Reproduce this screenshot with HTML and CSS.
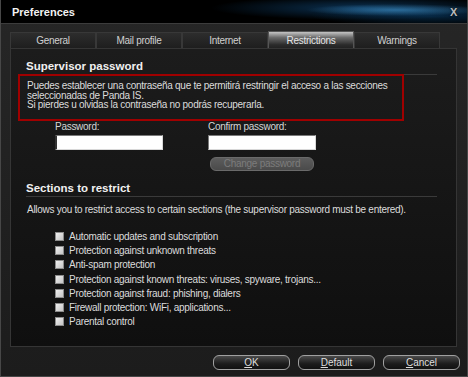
FILE: index.html
```html
<!DOCTYPE html>
<html lang="en">
  <head>
    <meta charset="UTF-8" />
    <title>Preferences</title>
    <link rel="stylesheet" href="styles.css">
  </head>
  <body>
    <div class="window">
      <div class="titlebar">
        <span class="title">Preferences</span>
        <span class="close">X</span>
      </div>

      <div class="content">
        <!-- Tabs -->
        <div class="tabs">
          <div class="tab">General</div>
          <div class="tab">Mail profile</div>
          <div class="tab">Internet</div>
          <div class="tab active">Restrictions</div>
          <div class="tab">Warnings</div>
        </div>

        <div class="panel">
          <!-- Supervisor password -->
          <h2>Supervisor password</h2>
          <div class="notice">
            <p>Puedes establecer una contraseña que te permitirá restringir el acceso a las secciones<br>seleccionadas de Panda IS.</p>
            <p>Si pierdes u olvidas la contraseña no podrás recuperarla.</p>
          </div>
          <div class="fields">
            <div class="field">
              <label for="pwd">Password:</label>
              <input type="password" id="pwd" class="caret" />
            </div>
            <div class="field">
              <label for="pwd2">Confirm password:</label>
              <input type="password" id="pwd2" />
              <button type="button" class="change" disabled>Change password</button>
            </div>
          </div>

          <!-- Sections to restrict -->
          <h2 class="second">Sections to restrict</h2>
          <p class="desc">Allows you to restrict access to certain sections (the supervisor password must be entered).</p>
          <ul class="checks">
            <li><span class="box"></span>Automatic updates and subscription</li>
            <li><span class="box"></span>Protection against unknown threats</li>
            <li><span class="box"></span>Anti-spam protection</li>
            <li><span class="box"></span>Protection against known threats: viruses, spyware, trojans...</li>
            <li><span class="box"></span>Protection against fraud: phishing, dialers</li>
            <li><span class="box"></span>Firewall protection: WiFi, applications...</li>
            <li><span class="box"></span>Parental control</li>
          </ul>
        </div>

        <div class="actions">
          <button type="button"><u>O</u>K</button>
          <button type="button"><u>D</u>efault</button>
          <button type="button"><u>C</u>ancel</button>
        </div>
      </div>
    </div>
  </body>
</html>
```

FILE: styles.css
```css
body {
  margin: 0;
  padding: 0;
  background: #1f1f1f;
  font-family: "Liberation Sans", Arial, sans-serif;
  font-size: 10px;
  letter-spacing: -0.28px;
  color: #dcdcdc;
}
.window {
  width: 468px;
  height: 377px;
  box-sizing: border-box;
  border: 1px solid #474747;
  border-top: none;
  background: linear-gradient(#262626, #1c1c1c);
  display: flex;
  flex-direction: column;
}
.titlebar {
  height: 23px;
  border-bottom: 1px solid #3c3c3c;
  background:
    radial-gradient(ellipse 90px 6px at 395px 10px, rgba(70, 160, 220, 0.55), transparent),
    radial-gradient(ellipse 150px 12px at 360px 8px, rgba(20, 90, 150, 0.55), transparent),
    radial-gradient(ellipse 120px 10px at 430px 16px, rgba(10, 70, 120, 0.5), transparent),
    #000;
  display: flex;
  align-items: center;
  justify-content: space-between;
  padding: 0 10px 0 11px;
}
.title {
  font-weight: bold;
  font-size: 11px;
  letter-spacing: 0;
  color: #f2f2f2;
}
.close {
  font-weight: bold;
  font-size: 11px;
  color: #bdbdbd;
  text-shadow: 0 0 2px #000;
}
.content {
  flex: 1;
  padding: 8px 10px 0 9px;
  display: flex;
  flex-direction: column;
}
.tabs {
  display: flex;
  height: 16px;
  align-items: flex-end;
}
.tab {
  width: 86px;
  height: 16px;
  box-sizing: border-box;
  border: 1px solid #383838;
  border-bottom: none;
  background: linear-gradient(#2d2d2d, #1e1e1e);
  color: #d0d0d0;
  text-align: center;
  line-height: 15px;
}
.tab.active {
  height: 17px;
  line-height: 17px;
  border-color: #555;
  background: linear-gradient(#c4c4c4, #6a6a6a 35%, #2b2b2b 80%, #222);
  color: #e6e6e6;
}
.panel {
  height: 299px;
  box-sizing: border-box;
  border: 1px solid #353535;
  background: linear-gradient(#1c1c1c, #0f0f0f);
  padding: 10px 19px 0 15px;
}
h2 {
  margin: 0;
  font-size: 11.5px;
  letter-spacing: 0;
  line-height: 14px;
  color: #f0f0f0;
  padding-bottom: 1px;
  border-bottom: 1px solid #3a3a3a;
}
h2.second {
  margin-top: 10px;
}
.notice {
  margin: -1px 33px 0 -8px;
  border: 2px solid #a00000;
  padding: 5px 7px 9px;
}
.notice p {
  margin: 0;
  line-height: 9.5px;
  white-space: nowrap;
}
.fields {
  display: flex;
  padding-left: 29px;
  gap: 45px;
}
.field {
  display: flex;
  flex-direction: column;
  width: 108px;
}
.field label {
  line-height: 12px;
  color: #d6d6d6;
}
.field input {
  margin: 2px 0 0;
  width: 108px;
  height: 15px;
  box-sizing: border-box;
  border: 1px solid #7a7a7a;
  border-right-color: #d8d8d8;
  border-bottom-color: #d8d8d8;
  background: #fff;
  padding: 0 2px;
  outline: none;
}
.caret {
  border-left: 2px solid #333 !important;
}
.change {
  margin: 7px 0 0 2px;
  width: 104px;
  height: 14px;
  border: 1px solid #6a6a6a;
  border-radius: 6px;
  background: linear-gradient(#5c5c5c, #4a4a4a);
  color: #7c7c7c;
  font-family: inherit;
  font-size: 10px;
  letter-spacing: -0.28px;
  padding: 0;
}
.desc {
  margin: 7px 0 0 1px;
  line-height: 12px;
}
.checks {
  list-style: none;
  margin: 14px 0 0 29px;
  padding: 0;
}
.checks li {
  height: 14.2px;
  display: flex;
  align-items: center;
  gap: 5px;
}
.box {
  width: 9px;
  height: 9px;
  box-sizing: border-box;
  border: 1px solid #8c8c8c;
  background: linear-gradient(135deg, #f0f0f0, #c4c4c4);
}
.actions {
  display: flex;
  justify-content: flex-end;
  gap: 8px;
  margin-top: 8px;
  margin-right: -3px;
}
.actions button {
  width: 77px;
  height: 15px;
  padding: 0;
  border: 1px solid #a0a0a0;
  border-radius: 6px;
  background: linear-gradient(#4a4a4a, #1c1c1c 60%, #111);
  color: #dedede;
  font-family: inherit;
  font-size: 10px;
  cursor: pointer;
}
```
